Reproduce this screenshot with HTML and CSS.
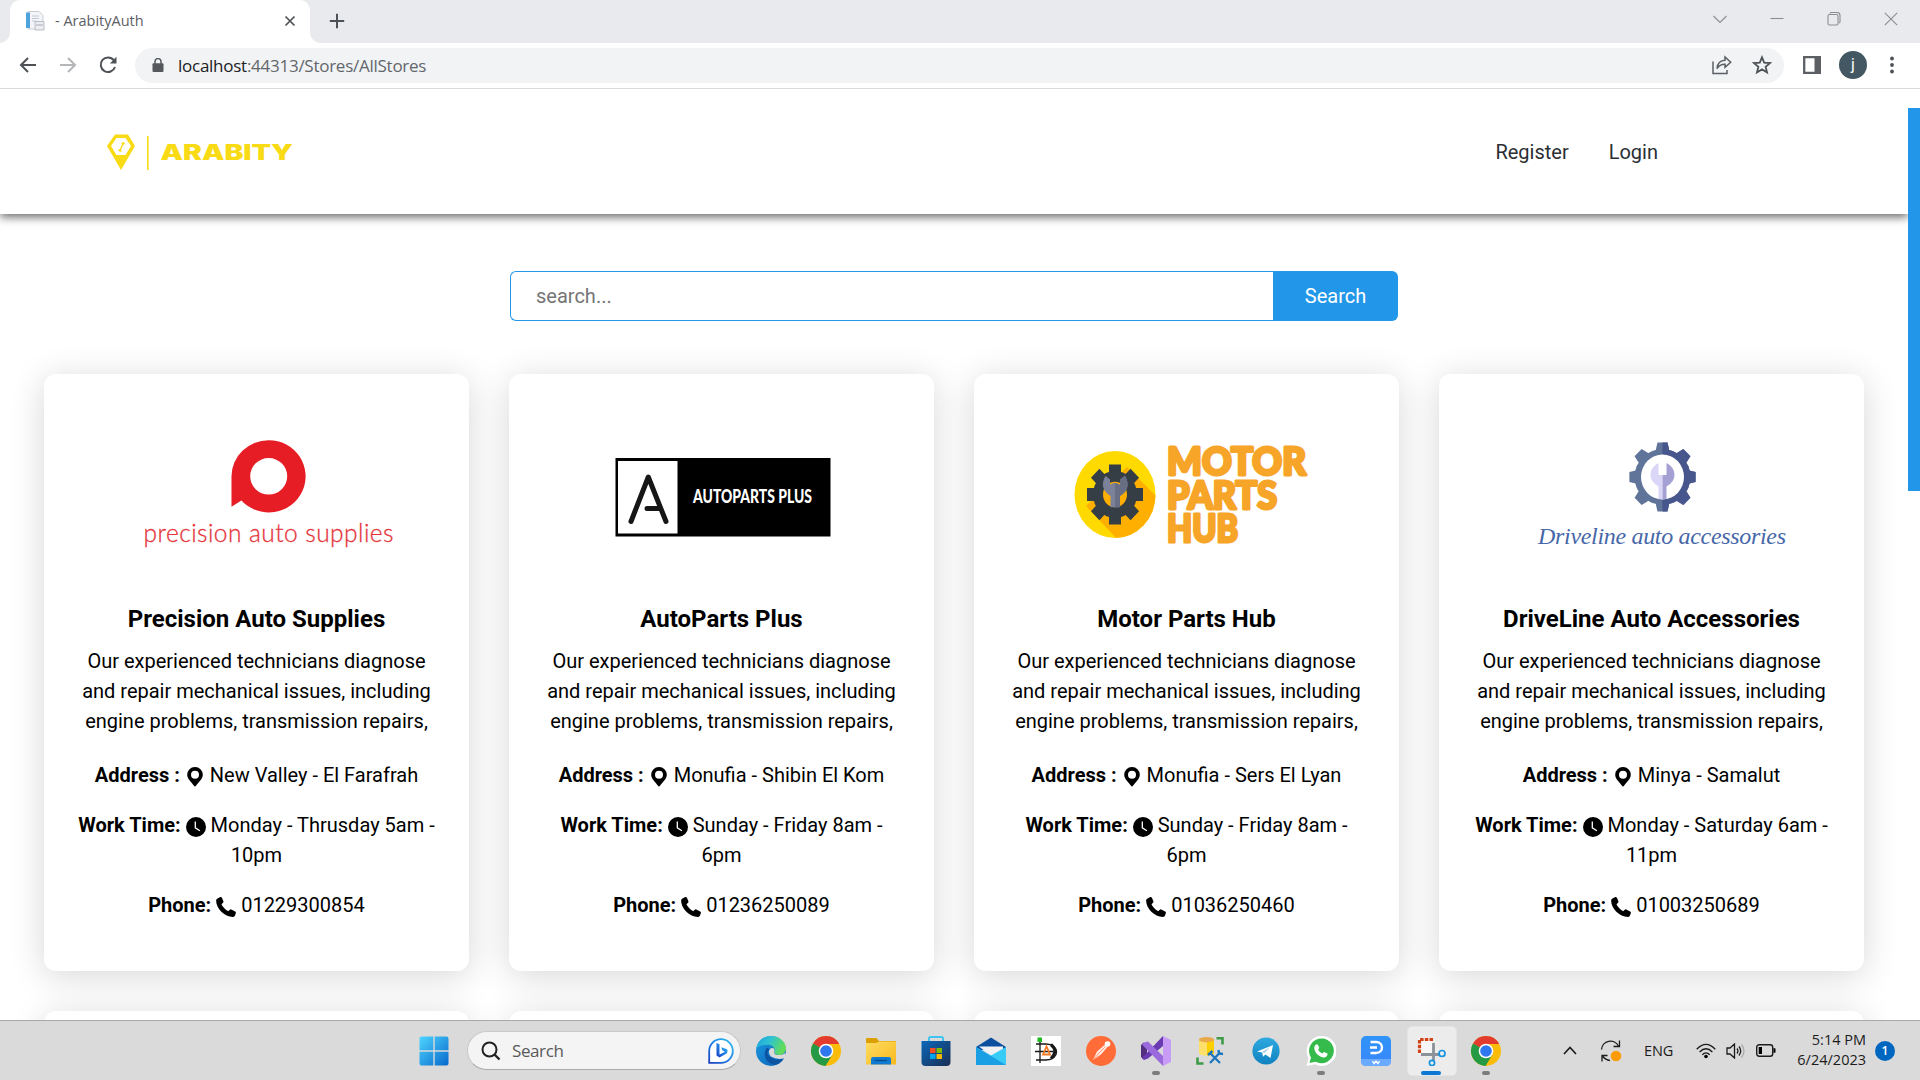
FILE: index.html
```html
<!DOCTYPE html>
<html lang="en">
<head>
<meta charset="utf-8">
<title>- ArabityAuth</title>
<link rel="stylesheet" href="styles.css">
</head>
<body>
<svg class="defs" width="0" height="0" aria-hidden="true">
  <defs>
    <linearGradient id="win" x1="0" y1="0" x2="1" y2="1"><stop offset="0" stop-color="#4fd5ff"/><stop offset="1" stop-color="#0669cc"/></linearGradient>
    <linearGradient id="edgeTop" x1="0" y1="0" x2="1" y2="0.3"><stop offset="0" stop-color="#1fa2e0"/><stop offset=".5" stop-color="#2fc3cf"/><stop offset="1" stop-color="#62dc5a"/></linearGradient>
    <linearGradient id="edgeLow" x1="0" y1="0" x2="1" y2="1"><stop offset="0" stop-color="#1b9de2"/><stop offset="1" stop-color="#0b5cb5"/></linearGradient>
    <linearGradient id="folder" x1="0" y1="0" x2="1" y2="1"><stop offset="0" stop-color="#ffdc62"/><stop offset="1" stop-color="#f8b91c"/></linearGradient>
    <linearGradient id="store" x1="0" y1="0" x2="1" y2="1"><stop offset="0" stop-color="#0b67ba"/><stop offset="1" stop-color="#1b2f52"/></linearGradient>
    <linearGradient id="tele" x1="0" y1="0" x2="0" y2="1"><stop offset="0" stop-color="#2fa9e0"/><stop offset="1" stop-color="#0f82c0"/></linearGradient>
    <linearGradient id="bing" x1="0" y1="1" x2="1" y2="0"><stop offset="0" stop-color="#1b3fc0"/><stop offset=".5" stop-color="#1d7fe8"/><stop offset="1" stop-color="#31c4ee"/></linearGradient>
    <linearGradient id="blueApp" x1="0" y1="0" x2="0" y2="1"><stop offset="0" stop-color="#2f94f8"/><stop offset="1" stop-color="#3a86ff"/></linearGradient>
    <symbol id="i-pin" viewBox="0 0 16 20"><path fill-rule="evenodd" d="M8 0a7.700 7.700 0 0 0-7.800 7.700C.2 12 4.400 15 8 19.800 11.600 15 15.800 12 15.800 7.700A7.700 7.700 0 0 0 8 0Zm0 3.800a4 4 0 1 1 0 8 4 4 0 0 1 0-8Z"/></symbol>
    <symbol id="i-clock" viewBox="0 0 20 20"><circle cx="10" cy="10" r="10"/><path d="M9.300 4.500v6.300l4.600 2.900" fill="none" stroke="#fff" stroke-width="1.300"/></symbol>
    <symbol id="i-phone" viewBox="0 0 20 20"><path d="M2.400.9 4.300.1q1-.3 1.600.7l1.500 3.500q.3.900-.4 1.500L5.500 7.200q1.800 4.200 6.700 7l1.600-1.500q.7-.6 1.500-.2l3.900 2q.9.500.7 1.500l-.9 2.600q-.4 1.300-2 1.300C8.500 20 .2 11.800.1 3.600Q.1 1.700 2.400.9Z"/></symbol>
    <symbol id="i-chrome" viewBox="0 0 30 30">
      <circle cx="15" cy="15" r="15" fill="#fbbc09"/>
      <path d="M15 15 2 7.500A15 15 0 0 0 14.500 30l7-11.500Z" fill="#249a45"/>
      <path d="M15 15 2 7.500A15 15 0 0 1 28.200 8H15Z" fill="#e33b2e"/>
      <path d="M2 7.500 8.500 18l6.500-3Z" fill="#249a45"/>
      <circle cx="15" cy="15" r="7.300" fill="#fff"/><circle cx="15" cy="15" r="5.800" fill="#2f77ee"/>
    </symbol>
  </defs>
</svg>

<div class="tabs">
  <div class="tab">
    <svg class="favicon" width="20" height="20" viewBox="0 0 20 20"><path d="M3 .5h11l4 4V18H3z" fill="#f4f5f8" stroke="#c9ccd3"/><path d="M1 1.500h4V17H1z" fill="#4ea3dc"/><path d="M7 5h7M7 7.500h7M7 10h4" stroke="#c5c8d2"/><path d="M10 10.500h9V19h-9z" fill="#eceef2" stroke="#b9bcc6"/><path d="M11 14h7" stroke="#aab"/></svg>
    <span class="tab-title">- ArabityAuth</span>
    <svg class="tab-close" width="12" height="12" viewBox="0 0 12 12"><path d="m1.500 1.500 9 9m0-9-9 9" stroke="#4e5256" stroke-width="1.700"/></svg>
  </div>
  <svg class="tab-new" width="16" height="16" viewBox="0 0 16 16"><path d="M8 .8v14.400M.8 8h14.400" stroke="#4e5256" stroke-width="2"/></svg>
  <div class="window-buttons">
    <svg width="14" height="14" viewBox="0 0 14 14"><path d="m.5 4 6.500 6.500L13.500 4"/></svg>
    <svg width="14" height="14" viewBox="0 0 14 14"><path d="M.5 6.500h13"/></svg>
    <svg width="14" height="14" viewBox="0 0 14 14"><rect x="1" y="2.500" width="10" height="10.500" rx="1.500"/><path d="M3 1.300Q3.200.5 4.500.5H10q3 0 3 3v6q0 1-.8 1.500"/></svg>
    <svg width="14" height="14" viewBox="0 0 14 14"><path d="m.8.8 12.400 12.400m0-12.400L.8 13.200"/></svg>
  </div>
</div>

<div class="toolbar">
  <svg class="nav-icon" width="18" height="18" viewBox="0 0 18 18"><path d="M17 9H2m7-7L2 9l7 7" stroke="#4e5256"/></svg>
  <svg class="nav-icon" width="18" height="18" viewBox="0 0 18 18"><path d="M1 9h15M9 2l7 7-7 7" stroke="#b4b7ba"/></svg>
  <svg class="nav-icon" width="18" height="18" viewBox="0 0 18 18"><path d="M14.800 4.200A7.300 7.300 0 1 0 16 11" stroke="#4e5256"/><path d="M17.500.8v6.700h-6.700Z" fill="#4e5256"/></svg>
  <div class="address">
    <svg width="12" height="14" viewBox="0 0 12 14"><path d="M1.500 5.300h9q1 0 1 1V13q0 1-1 1h-9q-1 0-1-1V6.300q0-1 1-1Z" fill="#55595e"/><path d="M3 6V3.600a3 3 0 0 1 6 0V6" fill="none" stroke="#55595e" stroke-width="1.500"/></svg>
    <span class="url"><b>localhost</b>:44313/Stores/AllStores</span>
    <svg class="share" width="20" height="20" viewBox="0 0 20 20"><path d="M1 6.500V18.500h14V15" /><path d="M5 13.500C5.500 8.500 8 5.500 13 5.300V2l5.700 5.200L13 12.300V9.200C9.500 9 7 10.500 5 13.500Z"/></svg>
    <svg class="star" width="20" height="20" viewBox="0 0 20 20"><path d="m10 2.300 2.200 5.300 5.800.5-4.400 3.700 1.400 5.600-5-3-5 3 1.400-5.600L2 8.100l5.800-.5Z"/></svg>
  </div>
  <svg class="panel" width="18" height="18" viewBox="0 0 18 18"><path d="M1.200 1.200h15.600v15.600H1.200z" fill="#fff" stroke="#5c6065" stroke-width="2.300"/><path d="M11.500 0H18v18h-6.500z" fill="#5c6065"/></svg>
  <span class="avatar">j</span>
  <svg class="dots" width="4" height="18" viewBox="0 0 4 18"><circle cx="2" cy="2.500" r="1.900"/><circle cx="2" cy="9" r="1.900"/><circle cx="2" cy="15.500" r="1.900"/></svg>
</div>

<div class="viewport">
  <div class="page">
    <header class="site-header">
      <svg class="brand" width="190" height="40" viewBox="0 0 190 40" fill="#f8da15">
        <path fill-rule="evenodd" d="M8 1.500h13L28 13 14 37 0 13ZM9.500 5 4 13l5.500 9h9L24 13 18.500 5Z"/>
        <path d="m11 17 2-1 2-5-1-1 3-1 1 2-2 1-2 5 1 1-2 1Z"/>
        <path d="M40 3h1.600v34H40z"/>
        <text x="53.500" y="27" class="brand-text" textLength="132.500" lengthAdjust="spacingAndGlyphs">ARABITY</text>
      </svg>
      <nav><a>Register</a><a>Login</a></nav>
    </header>

    <form class="search"><input type="text" placeholder="search..."><button type="button">Search</button></form>

    <main class="stores">
      <article class="card">
        <svg class="logo" viewBox="0 0 425 226">
          <path fill="#e71d25" fill-rule="evenodd" d="M224.700 66.200a36.800 36.100 0 1 1-27.300 60.200l-9.900 6.300V102.300A37 36.100 0 0 1 224.700 66.200Zm0 17.800a18.500 18.300 0 1 0 0 36.600 18.500 18.300 0 0 0 0-36.600Z"/>
          <text x="99.500" y="167.500" class="t-precision" textLength="250">precision auto supplies</text>
        </svg>
        <h2>Precision Auto Supplies</h2>
        <p class="about">Our experienced technicians diagnose and repair mechanical issues, including engine problems, transmission repairs,</p>
        <p><b>Address :</b> <svg class="ic"><use href="#i-pin"/></svg> New Valley - El Farafrah</p>
        <p><b>Work Time:</b> <svg class="ic"><use href="#i-clock"/></svg> Monday - Thrusday 5am - 10pm</p>
        <p><b>Phone:</b> <svg class="ic"><use href="#i-phone"/></svg> 01229300854</p>
      </article>
      <article class="card">
        <svg class="logo" viewBox="0 0 425 226">
          <path d="M106.500 84h215v78.500h-215z"/><path d="M109 87h59.500v72.500H109z" fill="#fff"/>
          <path d="m122 147.500 17.300-44.500 17.700 44.500M138 134.500h13" fill="none" stroke="#161616" stroke-width="5" stroke-linecap="round" stroke-linejoin="round"/>
          <text x="184" y="129" class="t-autoparts" textLength="119" lengthAdjust="spacingAndGlyphs">AUTOPARTS PLUS</text>
        </svg>
        <h2>AutoParts Plus</h2>
        <p class="about">Our experienced technicians diagnose and repair mechanical issues, including engine problems, transmission repairs,</p>
        <p><b>Address :</b> <svg class="ic"><use href="#i-pin"/></svg> Monufia - Shibin El Kom</p>
        <p><b>Work Time:</b> <svg class="ic"><use href="#i-clock"/></svg> Sunday - Friday 8am - 6pm</p>
        <p><b>Phone:</b> <svg class="ic"><use href="#i-phone"/></svg> 01236250089</p>
      </article>
      <article class="card">
        <svg class="logo" viewBox="0 0 425 226">
          <clipPath id="disc"><ellipse cx="141" cy="120.500" rx="40.500" ry="43.500"/></clipPath>
          <g clip-path="url(#disc)"><path d="M100 77h82v87h-82z" fill="#ffda00"/><path d="m153 93 30 30v42h-40l-31-33Z" fill="#ffaf00"/></g>
          <g transform="translate(141 120.500) scale(1 1.070)" fill="#353d45">
            <path d="M-6-28H6V28H-6zM-28-6H28V6H-28z"/><path d="M-6-28H6V28H-6zM-28-6H28V6H-28z" transform="rotate(45)"/>
            <circle r="22"/><circle r="12" fill="#ffaf00"/>
            <path d="M-9.500-17.500q-7 12 5 19V12H5V1.500q12-7 5-19L5-14v5q-5-4-10 0v-5Z" fill="#7b8199"/>
            <path d="M0-10.300q3 0 5 1.500V-14l5-3.500q7 12-5 19V12H0Z" fill="#686e84"/>
          </g>
          <g class="t-motor">
            <text x="193" y="100.500" textLength="139" lengthAdjust="spacingAndGlyphs">MOTOR</text>
            <text x="193" y="134.500" textLength="110" lengthAdjust="spacingAndGlyphs">PARTS</text>
            <text x="193" y="168" textLength="71" lengthAdjust="spacingAndGlyphs">HUB</text>
          </g>
        </svg>
        <h2>Motor Parts Hub</h2>
        <p class="about">Our experienced technicians diagnose and repair mechanical issues, including engine problems, transmission repairs,</p>
        <p><b>Address :</b> <svg class="ic"><use href="#i-pin"/></svg> Monufia - Sers El Lyan</p>
        <p><b>Work Time:</b> <svg class="ic"><use href="#i-clock"/></svg> Sunday - Friday 8am - 6pm</p>
        <p><b>Phone:</b> <svg class="ic"><use href="#i-phone"/></svg> 01036250460</p>
      </article>
      <article class="card">
        <svg class="logo" viewBox="0 0 425 226">
          <defs>
            <path id="tooth" d="m-6.500-28 1.500-6.500H5L6.500-28V28L5 34.500H-5L-6.500 28Z"/>
            <g id="gear"><circle r="28"/><use href="#tooth"/><use href="#tooth" transform="rotate(45)"/><use href="#tooth" transform="rotate(90) scale(1 .96)"/><use href="#tooth" transform="rotate(135)"/></g>
            <clipPath id="half"><path d="M0-40h40v80H0z"/></clipPath>
          </defs>
          <g transform="translate(223.500 103)">
            <use href="#gear" fill="#607399"/>
            <g clip-path="url(#half)"><use href="#gear" fill="#47568d"/></g>
            <ellipse rx="21.500" ry="22.500" fill="#fff"/>
            <path d="M-4-14q-8 4-8 12 0 7 8 11.500V22H0V-2h-4Z" fill="#d9d6f8"/><path d="M4-14q8 4 8 12 0 7-8 11.500V22H0V-2h4Z" fill="#a5a0d3"/>
          </g>
          <text x="99" y="169.500" class="t-drive" textLength="248" lengthAdjust="spacing">Driveline auto accessories</text>
        </svg>
        <h2>DriveLine Auto Accessories</h2>
        <p class="about">Our experienced technicians diagnose and repair mechanical issues, including engine problems, transmission repairs,</p>
        <p><b>Address :</b> <svg class="ic"><use href="#i-pin"/></svg> Minya - Samalut</p>
        <p><b>Work Time:</b> <svg class="ic"><use href="#i-clock"/></svg> Monday - Saturday 6am - 11pm</p>
        <p><b>Phone:</b> <svg class="ic"><use href="#i-phone"/></svg> 01003250689</p>
      </article>
      <article class="card"></article><article class="card"></article><article class="card"></article><article class="card"></article>
    </main>
  </div>
  <div class="scrollbar"><div class="thumb"></div></div>
</div>

<footer class="taskbar">
  <div class="start"><svg width="30" height="30" viewBox="0 0 30 30"><path fill="url(#win)" d="M2.500.5H14.300V14.300H.5V2.500q0-2 2-2ZM15.700.5H27.500q2 0 2 2V14.300H15.700ZM.5 15.700H14.300V29.500H2.500q-2 0-2-2ZM15.700 15.700H29.500V27.500q0 2-2 2H15.700Z"/></svg></div>
  <div class="tb-search">
    <svg width="20" height="20" viewBox="0 0 20 20"><circle cx="8.500" cy="8.500" r="7" fill="none" stroke="#222" stroke-width="2"/><path d="m13.500 13.500 5 5" stroke="#222" stroke-width="2.400"/></svg>
    <span>Search</span>
    <svg class="bing" width="26" height="26" viewBox="0 0 26 26"><path d="M1.200 24.800V13A11.800 11.800 0 1 1 13 24.800Z" fill="#fff" stroke="url(#bing)" stroke-width="1.800"/><path d="m8.500 5 3 1.200v10.300l5.500-2.800-2.500-1.200-1.300-3.200 5.800 2q1.200 1.200 0 4l-7.500 4.200-3-2Z" fill="url(#bing)"/></svg>
  </div>
  <div class="apps">
    <div class="app"><svg width="30" height="30" viewBox="0 0 30 30"><circle cx="15" cy="15" r="15" fill="url(#edgeLow)"/><path d="M.3 13C1.500 4 8 0 15 0c8 0 15 5.500 15 12.500 0 4-3 6.500-7 6.500-3 0-5.500-1-4.500-3 1.500-5-4-8.500-9-7C4 9 1.500 11 .3 13Z" fill="url(#edgeTop)"/><path d="M11 11.500C6 18 10 28 19 28.800c4-1 7.500-4 8.500-6.800-5 3-11 1.500-14-1.500-3-3-2-5.500.5-7Z" fill="#0c54a2"/><path d="M14 13c2-2 5-.5 4.500 2-1 3 1 4.300 5 4 3 0 5-1 6-2.500L30 22l-2 .5q-7.500 1.500-13-2c-2.500-3-2.500-6-1-7.500Z" fill="#dadada"/></svg></div>
    <div class="app"><svg width="30" height="30"><use href="#i-chrome"/></svg></div>
    <div class="app"><svg width="30" height="30" viewBox="0 0 30 30"><path d="M0 3q0-1 1-1h9.500L13 5h17v6H0Z" fill="#dda004"/><path d="M0 7h10l3-1.500h17V28.500H0Z" fill="url(#folder)"/><path d="M5 28.500V23q0-2 2-2h16q2 0 2 2v5.500Z" fill="#0f7bd0"/><path d="M9 24.500h12" stroke="#07498a" stroke-width="1.300"/></svg></div>
    <div class="app"><svg width="30" height="30" viewBox="0 0 30 30"><path d="M8 6V2.500Q8 1 9.500 1h11Q22 1 22 2.500V6" fill="none" stroke="#40c5f3" stroke-width="2"/><path d="M.500 5h29v21q0 4-4 4h-21q-4 0-4-4Z" fill="url(#store)"/><path d="M9 12h5.500v5H9z" fill="#f25022"/><path d="M15.500 12H21v5h-5.500z" fill="#7fba00"/><path d="M9 18h5.500v5H9z" fill="#00a4ef"/><path d="M15.500 18H21v5h-5.500z" fill="#ffb900"/></svg></div>
    <div class="app"><svg width="30" height="30" viewBox="0 0 30 30"><path d="M0 11 15 1.500 30 11v3H0Z" fill="#0c4f9e"/><path d="M3 10.500h24v8L15 20Z" fill="#f1f1f3"/><path d="M0 11 15 19.500 30 11v18H0Z" fill="#38cbf6"/><path d="M0 11 30 29H0Z" fill="#1b9fe4"/></svg></div>
    <div class="app"><svg width="30" height="30" viewBox="0 0 30 30"><path d="M0 0h30v30H0z" fill="#fff"/><path d="M5 8h10c14 0 14 16 0 16H5" fill="none" stroke="#181818" stroke-width="1.400"/><path d="M20 8.500q7.500 6.500 0 14" fill="none" stroke="#181818" stroke-width="3"/><path d="M9 4v23M4 15.500h18" stroke="#181818" stroke-width="1.300"/><path d="m12 18.500 3.500-8 3.500 8Z" fill="none" stroke="#f47a25" stroke-width="1.800"/><path d="M6.500 1.500H11V6H6.500z" fill="#1db91d"/></svg></div>
    <div class="app"><svg width="30" height="30" viewBox="0 0 30 30"><circle cx="15" cy="15" r="15" fill="#ff6c37"/><path d="m7 24 4-8.500L18.500 9l3 2-6.500 7.500Z" fill="#fff" opacity=".85"/><path d="m8 23 6-7 5-5" stroke="#ff9b78" fill="none"/><circle cx="21.500" cy="8" r="2.800" fill="#fff"/></svg></div>
    <div class="app run"><svg width="30" height="30" viewBox="0 0 30 30"><path d="m0 9 2.500-2.500 3.500 3v11l-3.500 3L0 21Z" fill="#52307f"/><path d="M22 0v10L7 22.500l-4 1.500-2-2Z" fill="#6a3ab2"/><path d="m3 6.500 4-1L22 20v10L1 8.500Z" fill="#9b6bdd"/><path d="m22 0 8 4v22l-8 4Z" fill="#c89bf7"/></svg></div>
    <div class="app"><svg width="30" height="30" viewBox="0 0 30 30"><path d="M3 3v14c0 3.500 15 3.500 15 0V3Z" fill="#fde06a"/><path d="M11 3h7v14q0 2-7 2.500Z" fill="#ffd000"/><ellipse cx="10.500" cy="3.700" rx="7.500" ry="2.700" fill="#e9a84a"/><path d="M20.500 2.300h6V8.500M1.500 21.500v6H7.500" fill="none" stroke="#3f9b48" stroke-width="2.600"/><path d="m14 17 10 10M24 16.500 14 27" stroke="#1d75bd" stroke-width="2.200"/><path d="m12 19 4.500-4M22.500 14l.5 3.500 4 .5" stroke="#1d75bd" stroke-width="2.400" fill="none"/></svg></div>
    <div class="app"><svg width="30" height="30" viewBox="0 0 30 30"><circle cx="15" cy="15" r="13.600" fill="url(#tele)"/><path d="M6 15.500 22 9l-2.500 13-5-3.500-2.500 2.300-.8-4.300Z" fill="#fff"/><path d="m11.200 16 8-5-6 6Z" fill="#9cc8e4"/></svg></div>
    <div class="app run"><svg width="30" height="30" viewBox="0 0 30 30"><path d="M.500 30 2.500 22A15 15 0 1 1 9 28.300Z" fill="#fff"/><path d="m3.500 27 1.500-5.500A12.400 12.400 0 1 1 9.500 25.700Z" fill="#35bb4b"/><path d="M10 8.500h1.800l1.500 3.500-1.200 1.800q1.500 2.700 4.200 3.700l1.600-1.600 3.600 1.600c.3 2.500-1.800 4-4.200 4C12 20.500 8 15.500 8.300 11.500Q8.500 9.500 10 8.500Z" fill="#fff"/></svg></div>
    <div class="app"><svg width="30" height="30" viewBox="0 0 30 30"><rect width="30" height="30" rx="5" fill="url(#blueApp)"/><path d="M0 23h30v2q0 5-5 5H5q-5 0-5-5Z" fill="#6aaaff"/><path d="M9.500 6H15c8 0 8 11 0 11H9.500M9 11.500h7" fill="none" stroke="#fff" stroke-width="2.400"/><path d="m11.500 25 1.500 2.500 2-2.500 2 2.500 1.500-2.500" fill="none" stroke="#fff" stroke-width="1.300"/></svg></div>
    <div class="app active"><svg width="30" height="30" viewBox="0 0 30 30"><path d="M2 2h14v16H2z" fill="#f7f7f7"/><path d="M17 3.500H3.500V17" fill="none" stroke="#d24317" stroke-width="3.200" stroke-dasharray="3.500 1.200"/><path d="M17.500 7v17M5 18.500h19" stroke="#8b9299" stroke-width="2.800"/><circle cx="26" cy="17.500" r="3" fill="none" stroke="#1593e0" stroke-width="1.700"/><circle cx="16" cy="27" r="2.600" fill="none" stroke="#1593e0" stroke-width="1.700"/></svg></div>
    <div class="app run"><svg width="30" height="30"><use href="#i-chrome"/></svg></div>
  </div>
  <div class="tray">
    <svg class="chev" width="14" height="9" viewBox="0 0 14 9"><path d="m1 8 6-6.500L13 8" fill="none" stroke="#1c1c1c" stroke-width="1.700"/></svg>
    <svg class="sync" width="22" height="22" viewBox="0 0 22 22"><g fill="none" stroke="#1c1c1c" stroke-width="1.300"><path d="M1.500 9.500A9 9 0 0 1 18.500 6M19.500.5v6h-6M10 20.500Q5.500 20 2.500 16M2 21.500V15.500H7.500"/></g><circle cx="16" cy="16" r="5.300" fill="#ff9b05"/></svg>
    <span class="lang">ENG</span>
    <svg class="wifi" width="20" height="16" viewBox="0 0 20 16"><g fill="none" stroke="#1c1c1c" stroke-width="1.300"><path d="M.7 6.300q9.300-9.800 18.600 0M3.600 9q6.400-6.500 12.800 0M6.300 11.800q3.700-3.800 7.400 0"/></g><circle cx="10" cy="13.500" r="1.800"/></svg>
    <svg class="vol" width="20" height="16" viewBox="0 0 20 16"><g fill="none" stroke="#1c1c1c" stroke-width="1.300"><path d="M1 5h3l4.500-4v14L4 11H1ZM11 5.500q1.800 2.500 0 5M13 3.500q3.400 4.500 0 9"/><path d="M15.500 1.500q5 6.500 0 13" stroke="#aaa"/></g></svg>
    <svg class="bat" width="20" height="13" viewBox="0 0 20 13"><rect x=".7" y=".7" width="16" height="11.600" rx="2.500" fill="none" stroke="#1c1c1c" stroke-width="1.400"/><path d="M2.700 3H6v7H2.700zM17.500 4l2 .5v4l-2 .5Z"/></svg>
    <div class="clock"><span>5:14 PM</span><span>6/24/2023</span></div>
    <span class="badge">1</span>
  </div>
</footer>
</body>
</html>
```
FILE: styles.css
```css
* { box-sizing: border-box; }
body { margin: 0; width: 1920px; height: 1080px; overflow: hidden; display: flex; flex-direction: column; background: #fff; font-family: Roboto, "Liberation Sans", sans-serif; }
.defs { position: absolute; }
svg { display: block; flex: none; }

/* browser chrome */
.tabs { height: 43px; background: #e8eaed; display: flex; align-items: flex-start; font-family: "Open Sans", "Noto Sans", sans-serif; }
.tab { position: relative; margin-left: 10px; width: 300px; height: 43px; background: #fff; border-radius: 10px 10px 0 0; display: flex; align-items: center; padding: 0 14px 1px 15px; }
.tab::before, .tab::after { content: ""; position: absolute; bottom: 0; width: 10px; height: 10px; }
.tab::before { left: -10px; background: radial-gradient(circle at 0 0, #e8eaed 9.500px, #fff 10px); }
.tab::after { right: -10px; background: radial-gradient(circle at 100% 0, #e8eaed 9.500px, #fff 10px); }
.tab-title { margin: -2px 0 0 10px; font-size: 14.500px; color: #5c6065; }
.tab-close { margin-left: auto; }
.tab-new { margin: 13px 0 0 19px; }
.window-buttons { margin: 12px 22px 0 auto; display: flex; gap: 43px; fill: none; stroke: #8b8d91; stroke-width: 1.100; }
.toolbar { height: 46px; border-bottom: 1px solid #d9dadc; display: flex; align-items: center; padding: 0 22px 1px 19px; }
.nav-icon { fill: none; stroke-width: 2; margin-right: 22px; }
.address { width: 1649px; height: 35px; margin-left: -4px; border-radius: 18px; background: #f1f3f4; display: flex; align-items: center; padding: 0 12px 0 17px; }
.url { margin-left: 14px; font: 17px "Open Sans", "Noto Sans", sans-serif; letter-spacing: -.26px; color: #63676c; }
.url b { font-weight: 400; color: #202124; }
.share { margin-left: auto; fill: none; stroke: #5c6065; stroke-width: 1.500; }
.star { margin-left: 20px; fill: none; stroke: #4e5256; stroke-width: 1.800; }
.panel { margin-left: 19px; }
.avatar { width: 28px; height: 28px; margin-left: 18px; border-radius: 50%; background: #435863; color: #fff; font-size: 16px; line-height: 27px; text-align: center; }
.dots { margin-left: 23px; fill: #4e5256; }

/* site */
.viewport { height: 931px; display: flex; overflow: hidden; }
.page { width: 1908px; overflow: hidden; }
.scrollbar { width: 12px; padding-top: 19px; }
.thumb { height: 383px; background: #2297e9; }
.site-header { height: 125px; padding: 2px 250px 0 107px; display: flex; align-items: center; justify-content: space-between; background: #fff; box-shadow: 0 3px 9px rgba(0, 0, 0, .6); }
.brand-text { font: 900 21px Inter, sans-serif; }
.site-header nav { margin-top: -2px; display: flex; gap: 40px; font-size: 20px; color: #2b2f33; }
.search { width: 888px; height: 50px; margin: 57px auto 0 510px; display: flex; }
.search input { flex: 1; min-width: 0; border: 1px solid #2297e9; border-right: 0; border-radius: 6px 0 0 6px; padding: 0 25px; font: 20px Roboto, sans-serif; outline: 0; }
.search input::placeholder { color: #757575; opacity: 1; }
.search button { width: 125px; border: 0; border-radius: 0 6px 6px 0; background: #2297e9; color: #fff; font: 20px Roboto, sans-serif; }
.stores { margin: 53px 44px 0; display: grid; grid-template-columns: repeat(4, 425px); gap: 40px; }
.card { height: 597px; border-radius: 12px; background: #fff; box-shadow: 0 5px 35px rgba(0, 0, 0, .16); text-align: center; color: #000; }
.logo { width: 425px; height: 226px; }
.card h2 { margin: 1px 0 9px; font-size: 24px; line-height: 36px; font-weight: 700; }
.card p { margin: 0 32px 20px; font-size: 20px; line-height: 30px; }
.card .about { margin-bottom: 24px; }
.card b { font-weight: 700; }
.ic { display: inline-block; width: 20px; height: 20px; vertical-align: -5px; }
.t-precision { font: 300 24.500px Lato, sans-serif; fill: #e5343b; stroke: #e5343b; stroke-width: .3; }
.t-autoparts { font: 900 18.500px Lato, sans-serif; fill: #fff; }
.t-motor { font: 900 37px Lato, sans-serif; fill: #f7a529; stroke: #f7a529; stroke-width: 3; stroke-linejoin: round; }
.t-drive { font: italic 24px "Liberation Serif", serif; fill: #4667a8; }

/* taskbar */
.taskbar { height: 60px; border-top: 1px solid #a9a9a9; background: #dadada; display: flex; align-items: center; font-family: "Open Sans", "Noto Sans", sans-serif; color: #1c1c1c; }
.start { margin-left: 419px; }
.tb-search { width: 274px; height: 39px; margin-left: 18px; border: 1px solid #c9c9c9; border-bottom-color: #aaa; border-radius: 20px; background: #f4f4f4; display: flex; align-items: center; padding: 0 6px 0 13px; font-size: 17px; color: #5a5a5a; }
.tb-search span { margin-left: 11px; letter-spacing: -.4px; }
.bing { margin-left: auto; }
.apps { margin-left: 2px; display: flex; }
.app { position: relative; width: 55px; height: 59px; display: flex; align-items: center; justify-content: center; }
.run::after, .active::after { content: ""; position: absolute; left: 24px; bottom: 5px; width: 8px; height: 4px; border-radius: 2px; background: #7c7c7c; }
.active::before { content: ""; position: absolute; left: 3.500px; top: 5px; width: 48px; height: 48px; border-radius: 5px; background: #ececec; border: 1px solid #e4e4e4; }
.active svg { position: relative; }
.active::after { left: 18px; width: 20px; background: #0a78d4; }
.tray { margin-left: auto; display: flex; align-items: center; padding-right: 25px; font-size: 14.500px; }
.sync { margin-left: 23px; }
.lang { margin-left: 22px; letter-spacing: -.2px; }
.wifi { margin-left: 23px; }
.vol { margin-left: 10px; }
.bat { margin-left: 10px; }
.clock { width: 90px; display: flex; flex-direction: column; align-items: flex-end; line-height: 20px; letter-spacing: 0; padding-bottom: 1px; }
.badge { width: 20px; height: 20px; margin-left: 9px; border-radius: 50%; background: #0067c0; color: #fff; font-size: 12px; font-weight: 600; line-height: 20px; text-align: center; }
```
